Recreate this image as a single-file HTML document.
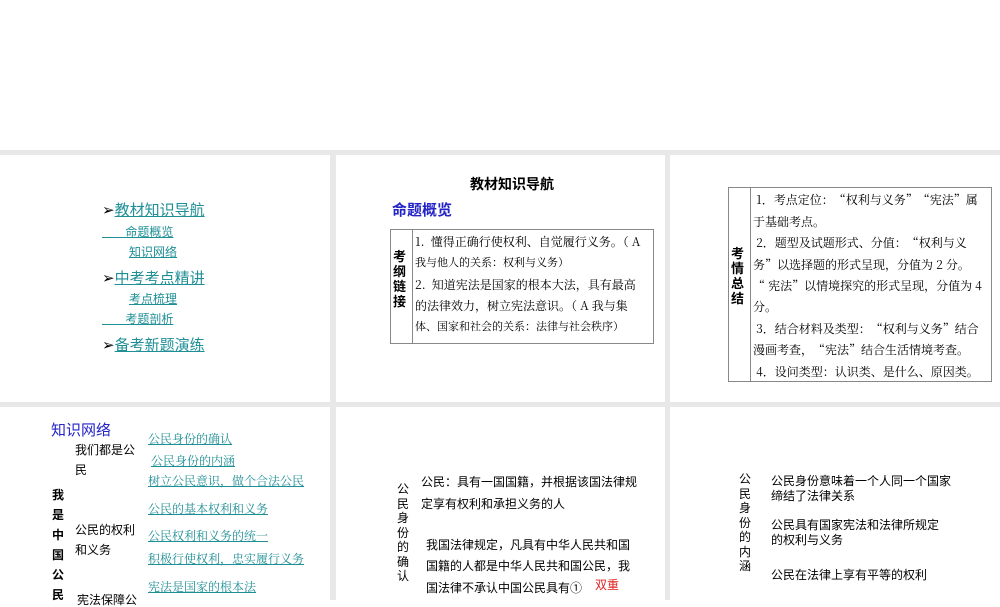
<!DOCTYPE html>
<html><head><meta charset="utf-8"><style>
body{margin:0;width:1000px;height:600px;overflow:hidden;background:#fff;position:relative;font-family:"Liberation Sans","Noto Sans CJK SC",sans-serif}
.g{position:absolute;left:0;top:150px;width:1000px;height:450px;background:#e8e8e8}
.p{position:absolute;background:#fff}
.t{position:absolute;white-space:nowrap;line-height:1}
.ln{color:#1f8f96;text-decoration:underline}
.s{font-family:"Noto Serif CJK SC","Liberation Serif",serif;font-size:12px}
.tb{position:absolute;border:1px solid #888;box-sizing:border-box}
.tb .c{position:absolute;top:0;bottom:0;border-right:1px solid #888}
</style></head><body>
<div class="g"></div>
<div class="p" style="left:0;top:155px;width:330px;height:247px"></div>
<div class="p" style="left:336px;top:155px;width:329px;height:247px"></div>
<div class="p" style="left:670px;top:155px;width:330px;height:247px"></div>
<div class="p" style="left:0;top:407px;width:330px;height:193px"></div>
<div class="p" style="left:336px;top:407px;width:329px;height:193px"></div>
<div class="p" style="left:670px;top:407px;width:330px;height:193px"></div>

<!-- panel 1 -->
<div class="t" style="left:102px;top:203px;font-size:15px">➢<span class="ln">教材知识导航</span></div>
<div class="t ln" style="left:102px;top:226px;font-size:12px">&nbsp;&nbsp;&nbsp;&nbsp;&nbsp;&nbsp;&nbsp;命题概览</div>
<div class="t ln" style="left:129px;top:246px;font-size:12px">知识网络</div>
<div class="t" style="left:102px;top:271px;font-size:15px">➢<span class="ln">中考考点精讲</span></div>
<div class="t ln" style="left:129px;top:293px;font-size:12px">考点梳理</div>
<div class="t ln" style="left:102px;top:313px;font-size:12px">&nbsp;&nbsp;&nbsp;&nbsp;&nbsp;&nbsp;&nbsp;考题剖析</div>
<div class="t" style="left:102px;top:338px;font-size:15px">➢<span class="ln">备考新题演练</span></div>

<!-- panel 2 -->
<div class="t" style="left:470px;top:177px;font-size:14px;font-weight:bold">教材知识导航</div>
<div class="t" style="left:392px;top:203px;font-size:15px;color:#2323c8;font-weight:bold">命题概览</div>
<div class="tb" style="left:390px;top:229px;width:264px;height:115px"><div class="c" style="left:0;width:21px"></div></div>
<div class="t" style="left:393px;top:249px;font-size:13px;font-weight:bold;line-height:15px;width:14px;white-space:normal">考纲链接</div>
<div class="t s" style="left:415px;top:236px">1.&nbsp;&nbsp;懂得正确行使权利、自觉履行义务。（ A</div>
<div class="t s" style="left:415px;top:257px;font-size:11px">我与他人的关系：权利与义务）</div>
<div class="t s" style="left:415px;top:279px">2.&nbsp;&nbsp;知道宪法是国家的根本大法，具有最高</div>
<div class="t s" style="left:415px;top:300px">的法律效力，树立宪法意识。（ A 我与集</div>
<div class="t s" style="left:415px;top:321px;font-size:11px">体、国家和社会的关系：法律与社会秩序）</div>

<!-- panel 3 -->
<div class="tb" style="left:728px;top:187px;width:264px;height:195px"><div class="c" style="left:0;width:21px"></div></div>
<div class="t" style="left:731px;top:246px;font-size:13px;font-weight:bold;line-height:15px;width:14px;white-space:normal">考情总结</div>
<div class="t s" style="left:753px;top:194px">&nbsp;1．考点定位：“权利与义务”“宪法”属</div>
<div class="t s" style="left:753px;top:216px">于基础考点。</div>
<div class="t s" style="left:753px;top:237px">&nbsp;2．题型及试题形式、分值：“权利与义</div>
<div class="t s" style="left:753px;top:259px">务”以选择题的形式呈现，分值为 2 分。</div>
<div class="t s" style="left:753px;top:280px">“ 宪法”以情境探究的形式呈现，分值为 4</div>
<div class="t s" style="left:753px;top:301px">分。</div>
<div class="t s" style="left:753px;top:323px">&nbsp;3．结合材料及类型：“权利与义务”结合</div>
<div class="t s" style="left:753px;top:344px">漫画考查，“宪法”结合生活情境考查。</div>
<div class="t s" style="left:753px;top:366px">&nbsp;4．设问类型：认识类、是什么、原因类。</div>

<!-- panel 4 -->
<div class="t" style="left:51px;top:423px;font-size:15px;color:#2323c8">知识网络</div>
<div class="t" style="left:75px;top:444px;font-size:12px">我们都是公</div>
<div class="t" style="left:75px;top:464px;font-size:12px">民</div>
<div class="t" style="left:52px;top:485px;font-size:12px;font-weight:bold;line-height:20px;width:13px;white-space:normal">我是中国公民</div>
<div class="t" style="left:75px;top:524px;font-size:12px">公民的权利</div>
<div class="t" style="left:75px;top:544px;font-size:12px">和义务</div>
<div class="t" style="left:77px;top:594px;font-size:12px">宪法保障公</div>
<div class="t ln s" style="left:148px;top:433px">公民身份的确认</div>
<div class="t ln s" style="left:151px;top:455px">公民身份的内涵</div>
<div class="t ln s" style="left:148px;top:475px">树立公民意识，做个合法公民</div>
<div class="t ln s" style="left:148px;top:503px">公民的基本权利和义务</div>
<div class="t ln s" style="left:148px;top:530px">公民权利和义务的统一</div>
<div class="t ln s" style="left:148px;top:553px">积极行使权利，忠实履行义务</div>
<div class="t ln s" style="left:148px;top:581px">宪法是国家的根本法</div>

<!-- panel 5 -->
<div class="t" style="left:397px;top:482px;font-size:12px;line-height:14.5px;width:13px;white-space:normal">公民身份的确认</div>
<div class="t" style="left:421px;top:476px;font-size:12px">公民：具有一国国籍，并根据该国法律规</div>
<div class="t" style="left:421px;top:498px;font-size:12px">定享有权利和承担义务的人</div>
<div class="t" style="left:426px;top:539px;font-size:12px">我国法律规定，凡具有中华人民共和国</div>
<div class="t" style="left:426px;top:560px;font-size:12px">国籍的人都是中华人民共和国公民，我</div>
<div class="t" style="left:426px;top:582px;font-size:12px">国法律不承认中国公民具有①</div>
<div class="t" style="left:595px;top:579px;font-size:12px;color:#e02020">双重</div>

<!-- panel 6 -->
<div class="t" style="left:739px;top:472px;font-size:12px;line-height:14.5px;width:13px;white-space:normal">公民身份的内涵</div>
<div class="t" style="left:771px;top:475px;font-size:12px">公民身份意味着一个人同一个国家</div>
<div class="t" style="left:771px;top:490px;font-size:12px">缔结了法律关系</div>
<div class="t" style="left:771px;top:519px;font-size:12px">公民具有国家宪法和法律所规定</div>
<div class="t" style="left:771px;top:534px;font-size:12px">的权利与义务</div>
<div class="t" style="left:771px;top:569px;font-size:12px">公民在法律上享有平等的权利</div>
</body></html>
